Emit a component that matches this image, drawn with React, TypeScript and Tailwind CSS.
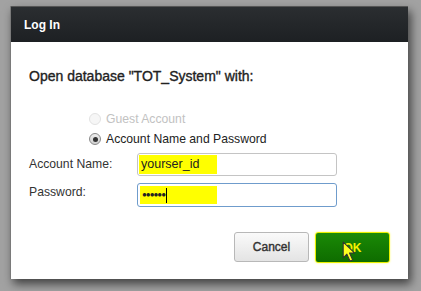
import React from "react";

export default function App() {
  const font = { fontFamily: '"Liberation Sans", Arial, sans-serif' };
  return (
    <div className="w-[421px] h-[291px] bg-[#a2a2a2] pl-[10px] pt-[6px] overflow-hidden" style={font}>
      <div className="relative w-[398px] h-[273px] bg-white flex flex-col shadow-[3px_5px_9px_rgba(0,0,0,0.6)] border-l border-[#7a7a7a]">
        <div className="h-[36px] shrink-0 bg-gradient-to-b from-[#2b2e31] to-[#1d2023] flex items-center pl-[13px] pt-[1px] border-t border-[#555]">
          <span className="text-white font-bold text-[12px]">Log In</span>
        </div>
        <div className="flex flex-col pl-[18px] pr-[18px]">
          <div className="mt-[25px] text-[14px] text-[#222] leading-[18px] [-webkit-text-stroke:0.35px_#222]">
            Open database "TOT_System" with:
          </div>
          <div className="mt-[24px] ml-[60px] flex flex-col">
            <div className="h-[20px] flex items-center gap-[5px]">
              <span className="w-[12px] h-[12px] rounded-full border border-[#e2e2e2] bg-[#f6f6f6]"></span>
              <span className="text-[12.2px] text-[#c2c2c2]">Guest Account</span>
            </div>
            <div className="h-[20px] flex items-center gap-[5px]">
              <span className="w-[12px] h-[12px] rounded-full border border-[#8a8a8a] bg-gradient-to-b from-[#eee] to-[#d0d0d0] flex items-center justify-center">
                <span className="w-[5px] h-[5px] rounded-full bg-[#333]"></span>
              </span>
              <span className="text-[12.2px] text-[#222]">Account Name and Password</span>
            </div>
          </div>
          <div className="mt-[4px] flex items-center h-[23px]">
            <span className="w-[108px] text-[12.2px] text-[#333]">Account Name:</span>
            <div className="w-[200px] h-[23px] rounded-[3px] border border-[#c4c4c4] bg-white p-[1px] flex">
              <div className="w-[78px] h-full bg-[#ffff00] flex items-center pl-[2px] text-[12.5px] text-[#222]">yourser_id</div>
            </div>
          </div>
          <div className="mt-[7px] flex items-start h-[24px]">
            <span className="w-[108px] text-[12.2px] text-[#333] leading-[18px]">Password:</span>
            <div className="w-[200px] h-[24px] rounded-[3px] border border-[#6f9ccc] bg-white p-[2px] flex">
              <div className="w-[77px] h-full bg-[#ffff00] flex items-center pl-[2px]">
                <span className="text-[8px] text-[#222] tracking-[-1px]">●●●●●●</span>
                <span className="w-[1px] h-[15px] bg-black ml-[1px]"></span>
              </div>
            </div>
          </div>
          <div className="mt-[25px] flex justify-end gap-[6px]">
            <div className="w-[75px] h-[30px] rounded-[3px] border border-[#b8b8b8] bg-gradient-to-b from-[#fafafa] to-[#e4e4e4] flex items-center justify-center text-[12px] text-[#333] [-webkit-text-stroke:0.4px_#333]">
              Cancel
            </div>
            <div className="relative w-[75px] h-[31px] rounded-[3px] border border-[#e8f000] bg-gradient-to-b from-[#1a8a06] to-[#0e6c00] flex items-center justify-center text-[12px] font-bold text-[#f4f000] shadow-[0_0_2px_#ffff60]">
              OK
              <svg className="absolute left-[26px] top-[8px]" width="15" height="21" viewBox="0 0 14 20">
                <path d="M1 1 L1 16 L4.5 12.5 L7.5 19 L10 18 L7 11.5 L12 11.5 Z" fill="#ffff20" stroke="#333" strokeWidth="1" strokeLinejoin="round" />
              </svg>
            </div>
          </div>
        </div>
      </div>
    </div>
  );
}
